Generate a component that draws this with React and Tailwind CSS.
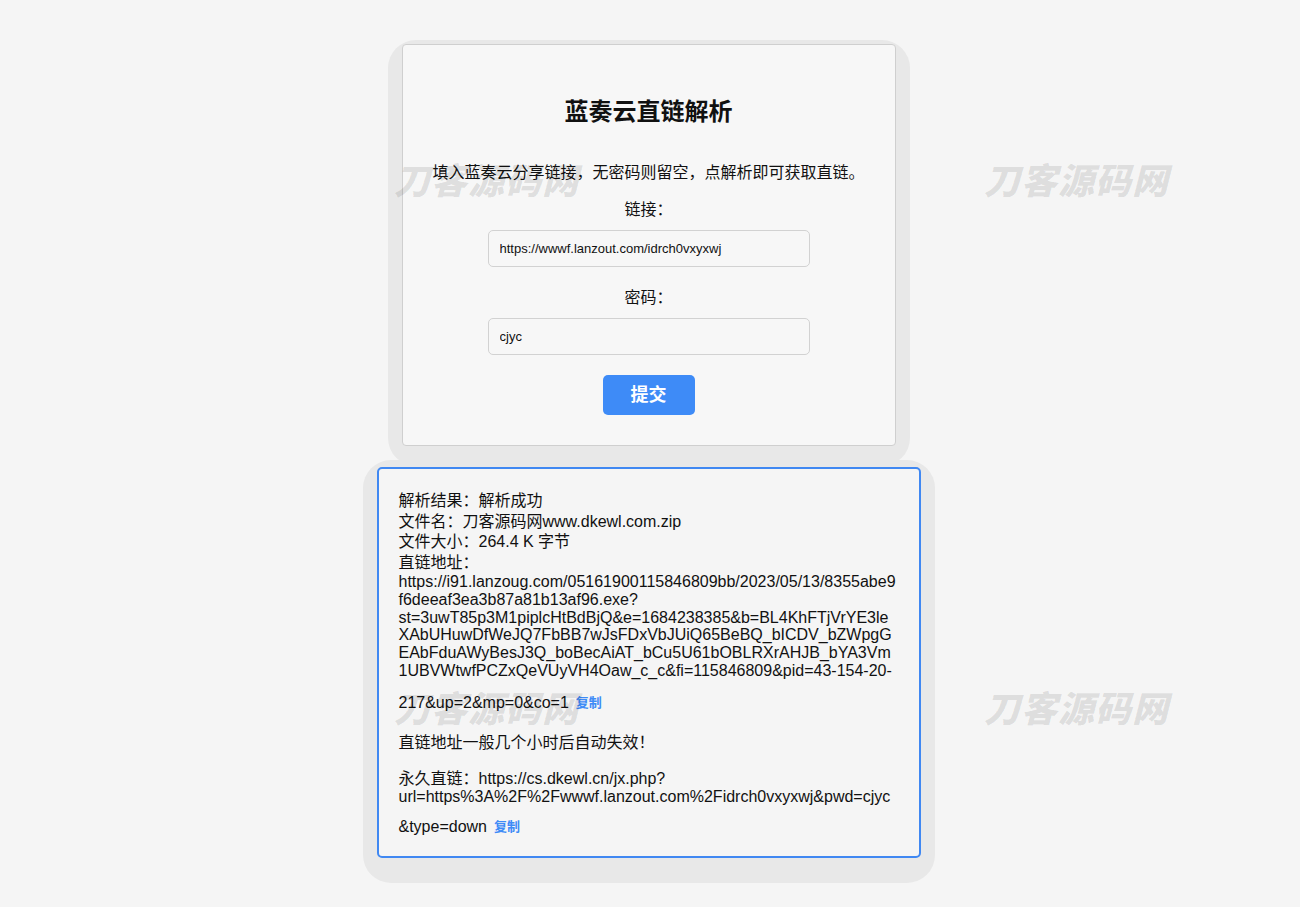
import React from 'react';

const font = { fontFamily: '"Liberation Sans", Arial, "Noto Sans CJK SC", sans-serif' };

const urlLines = [
    'https://i91.lanzoug.com/05161900115846809bb/2023/05/13/8355abe9',
    'f6deeaf3ea3b87a81b13af96.exe?',
    'st=3uwT85p3M1piplcHtBdBjQ&e=1684238385&b=BL4KhFTjVrYE3le',
    'XAbUHuwDfWeJQ7FbBB7wJsFDxVbJUiQ65BeBQ_bICDV_bZWpgG',
    'EAbFduAWyBesJ3Q_boBecAiAT_bCu5U61bOBLRXrAHJB_bYA3Vm',
    '1UBVWtwfPCZxQeVUyVH4Oaw_c_c&fi=115846809&pid=43-154-20-',
];

function CopyBtn() {
    return (
        <span className="ml-[7px] text-[13px] font-bold text-[#3e8bf7] cursor-pointer">复制</span>
    );
}

function Watermark({ className }) {
    return (
        <div
            className={`absolute pointer-events-none select-none text-[36px] leading-none font-black italic tracking-[1px] text-black/10 ${className}`}
            style={{ fontFamily: '"Noto Sans CJK SC", sans-serif' }}
        >
            刀客源码网
        </div>
    );
}

export default function App() {
    return (
        <div className="relative min-h-[907px] bg-[#f5f5f5] text-[#111] overflow-hidden" style={font}>
            <div className="flex flex-col items-center pt-[40px] pr-[3px]">
                {/* 表单 */}
                <div className="relative z-10 bg-[#e8e8e8] rounded-[28px] pt-[4px] px-[14px] pb-[20px]">
                    <div className="w-[494px] bg-[#f7f7f7] border border-[#cfcfcf] rounded-[4px] flex flex-col items-center pt-[51px] pb-[30px]">
                        <h2 className="text-[24px] leading-[32px] font-bold">蓝奏云直链解析</h2>
                        <p className="mt-[34px] text-[16px] leading-[22px]">填入蓝奏云分享链接，无密码则留空，点解析即可获取直链。</p>
                        <label className="mt-[15px] text-[16px] leading-[22px]">链接：</label>
                        <input
                            className="mt-[9px] w-[322px] h-[37px] px-[11px] text-[13px] bg-[#f7f7f7] border border-[#d2d2d2] rounded-[5px] outline-none"
                            defaultValue="https://wwwf.lanzout.com/idrch0vxyxwj"
                            style={font}
                        />
                        <label className="mt-[20px] text-[16px] leading-[22px]">密码：</label>
                        <input
                            className="mt-[9px] w-[322px] h-[37px] px-[11px] text-[13px] bg-[#f7f7f7] border border-[#d2d2d2] rounded-[5px] outline-none"
                            defaultValue="cjyc"
                            style={font}
                        />
                        <button className="mt-[20px] w-[92px] h-[40px] bg-[#3e8bf7] text-white text-[18px] font-bold rounded-[5px]">提交</button>
                    </div>
                </div>

                {/* 结果 */}
                <div className="-mt-[6px] bg-[#e8e8e8] rounded-[28px] pt-[7px] px-[14px] pb-[25px]">
                    <div className="w-[544px] bg-[#f5f5f5] border-2 border-[#4088f2] rounded-[5px] px-[20px] pt-[22px] pb-[19px] text-[16px]">
                        <div className="leading-[20.5px]">解析结果：解析成功</div>
                        <div className="leading-[20.5px]">文件名：刀客源码网www.dkewl.com.zip</div>
                        <div className="leading-[20.5px]">文件大小：264.4 K 字节</div>
                        <div className="leading-[20.5px]">直链地址：</div>
                        <div className="leading-[17.8px]">
                            {urlLines.map((l, i) => (
                                <div key={i}>{l}</div>
                            ))}
                        </div>
                        <div className="mt-[12.4px] leading-[21px] flex items-center">
                            217&amp;up=2&amp;mp=0&amp;co=1 <CopyBtn />
                        </div>
                        <div className="mt-[18.6px] leading-[21px]">直链地址一般几个小时后自动失效！</div>
                        <div className="mt-[17.5px] leading-[18px]">永久直链：https://cs.dkewl.cn/jx.php?</div>
                        <div className="leading-[17.8px]">url=https%3A%2F%2Fwwwf.lanzout.com%2Fidrch0vxyxwj&amp;pwd=cjyc</div>
                        <div className="mt-[10.4px] leading-[21px] flex items-center">
                            &amp;type=down <CopyBtn />
                        </div>
                    </div>
                </div>
            </div>

            <Watermark className="z-20 left-[394px] top-[160px]" />
            <Watermark className="z-20 left-[984px] top-[160px]" />
            <Watermark className="z-20 left-[394px] top-[688px]" />
            <Watermark className="z-20 left-[984px] top-[688px]" />
        </div>
    );
}
